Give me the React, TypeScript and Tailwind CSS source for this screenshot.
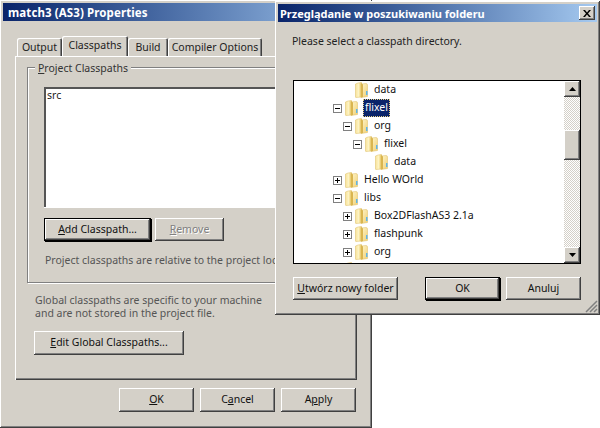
import React from "react";

const raised = "shadow-[inset_-1px_-1px_0_#404040,inset_1px_1px_0_#ffffff,inset_-2px_-2px_0_#808080]";
const etched = "border border-[#808080] shadow-[1px_1px_0_#ffffff,inset_1px_1px_0_#ffffff]";

function Btn({ className = "", isDefault = false, disabled = false, children }: { className?: string; isDefault?: boolean; disabled?: boolean; children: React.ReactNode }) {
  const outer = isDefault ? "border border-black shadow-[inset_-1px_-1px_0_#404040,inset_1px_1px_0_#ffffff,inset_-2px_-2px_0_#808080,1px_1px_0_#000000]" : raised;
  const text = disabled ? "text-[#808080] [text-shadow:1px_1px_0_#ffffff]" : "text-[#111111]";
  return <div className={`flex items-center justify-center whitespace-nowrap bg-[#d4d0c8] pb-[1px] ${outer} ${text} ${className}`}>{children}</div>;
}

function Tab({ className, label, active = false }: { className: string; label: string; active?: boolean }) {
  return (
    <div className={`flex items-center justify-center whitespace-nowrap rounded-t-[2px] bg-[#d4d0c8] text-[#222222] shadow-[inset_1px_1px_0_#ffffff,inset_-1px_0_0_#404040,inset_-2px_0_0_#808080] ${active ? "relative z-10 h-[20px] pb-[2px]" : "h-[18px]"} ${className}`}>
      {label}
    </div>
  );
}

function Folder() {
  return (
    <svg width="13" height="16" viewBox="0 0 13 16" className="shrink-0">
      <defs>
        <linearGradient id="fa" x1="0" y1="0" x2="1" y2="0">
          <stop offset="0" stopColor="#f8e39a" />
          <stop offset="0.5" stopColor="#fdf3c4" />
          <stop offset="1" stopColor="#e9c862" />
        </linearGradient>
        <linearGradient id="fb" x1="0" y1="0" x2="1" y2="1">
          <stop offset="0" stopColor="#fff7cf" />
          <stop offset="1" stopColor="#f0cf72" />
        </linearGradient>
      </defs>
      <path d="M0.5 2 L3 1 L6.5 0.5 L6.5 15 L1 15.5 Q0.5 15.5 0.5 15 Z" fill="url(#fa)" stroke="#dcbc62" strokeWidth="0.5" />
      <path d="M6 2 L11 1.5 Q12.5 1.5 12.5 3 L12.5 14.5 L6 15.5 Z" fill="url(#fb)" stroke="#dcbc62" strokeWidth="0.5" />
      <path d="M6 1 L8 2.5 L8 15 L6 15.5 Z" fill="#d9b550" />
      <rect x="11" y="9" width="1.5" height="4" fill="#5fb4e8" />
    </svg>
  );
}

function Expander({ open }: { open: boolean }) {
  return (
    <svg width="9" height="9" viewBox="0 0 9 9" className="shrink-0">
      <rect x="0.5" y="0.5" width="8" height="8" fill="#ffffff" stroke="#808080" />
      <rect x="2" y="4" width="5" height="1" fill="#000000" />
      {!open && <rect x="4" y="2" width="1" height="5" fill="#000000" />}
    </svg>
  );
}

const rows: { level: number; label: string; exp?: "open" | "closed"; selected?: boolean }[] = [
  { level: 1, label: "data" },
  { level: 0, label: "flixel", exp: "open", selected: true },
  { level: 1, label: "org", exp: "open" },
  { level: 2, label: "flixel", exp: "open" },
  { level: 3, label: "data" },
  { level: 0, label: "Hello WOrld", exp: "closed" },
  { level: 0, label: "libs", exp: "open" },
  { level: 1, label: "Box2DFlashAS3 2.1a", exp: "closed" },
  { level: 1, label: "flashpunk", exp: "closed" },
  { level: 1, label: "org", exp: "closed" },
  { level: 0, label: "", exp: undefined },
];

function ScrollButton({ up }: { up: boolean }) {
  return (
    <div className={`flex h-[16px] items-center justify-center bg-[#d4d0c8] ${raised}`}>
      <svg width="7" height="4" viewBox="0 0 7 4">
        <path d={up ? "M3.5 0 L7 4 L0 4 Z" : "M0 0 L7 0 L3.5 4 Z"} fill="#000000" />
      </svg>
    </div>
  );
}

export default function App() {
  return (
    <div className="relative h-[428px] w-[600px] overflow-hidden bg-white font-['Noto_Sans',sans-serif] text-[10.5px] leading-[13px]">
      {/* Properties window */}
      <div className={`absolute left-0 top-0 flex h-[428px] w-[372px] flex-col bg-[#d4d0c8] pl-[3px] pr-[3px] pt-[3px] ${raised}`}>
        <div className="flex h-[18px] shrink-0 items-center bg-gradient-to-r from-[#0a246a] to-[#a6caf0] pl-[5px] text-[11.5px] font-bold tracking-[0.1px] text-white">
          match3 (AS3) Properties
        </div>
        <div className="flex flex-col pl-[12px] pr-[12px] pt-[15px]">
          <div className="flex items-end pl-[2px]">
            <Tab className="w-[45px]" label="Output" />
            <Tab className="w-[66px]" label="Classpaths" active />
            <Tab className="w-[40px]" label="Build" />
            <Tab className="w-[94px]" label="Compiler Options" />
          </div>
          <div className="flex h-[324px] flex-col bg-[#d4d0c8] pl-[12px] pt-[11px] shadow-[inset_1px_1px_0_#ffffff,inset_-1px_-1px_0_#404040,inset_-2px_-2px_0_#808080]">
            <div className={`relative flex h-[216px] w-[400px] flex-col pl-[16px] pt-[19px] ${etched}`}>
              <div className="absolute left-[7px] top-[-6px] bg-[#d4d0c8] px-[3px] text-[#333333]">
                <u>P</u>roject Classpaths
              </div>
              <div className="h-[120px] w-[300px] border-l-2 border-t-2 border-l-[#555555] border-t-[#555555] bg-white pl-[1px] text-[#222222] shadow-[0_1px_0_#ffffff]">
                src
              </div>
              <div className="mt-[11px] flex gap-[4px]">
                <Btn className="h-[23px] w-[107px]" isDefault>
                  <span><u>A</u>dd Classpath...</span>
                </Btn>
                <Btn className="h-[23px] w-[69px]" disabled>
                  <span><u>R</u>emove</span>
                </Btn>
              </div>
              <div className="mt-[13px] whitespace-nowrap pl-[1px] text-[#555555]">
                Project classpaths are relative to the project location
              </div>
            </div>
            <div className="mt-[11px] pl-[8px] text-[#555555]">
              Global classpaths are specific to your machine
              <br />
              and are not stored in the project file.
            </div>
            <Btn className="ml-[7px] mt-[11px] h-[24px] w-[150px]">
              <span><u>E</u>dit Global Classpaths...</span>
            </Btn>
          </div>
          <div className="mt-[8px] flex justify-end gap-[6px] pr-[1px]">
            <Btn className="h-[24px] w-[75px]"><span><u>O</u>K</span></Btn>
            <Btn className="h-[24px] w-[75px]"><span>C<u>a</u>ncel</span></Btn>
            <Btn className="h-[24px] w-[75px]"><span>A<u>p</u>ply</span></Btn>
          </div>
        </div>
      </div>

      {/* Browse-for-folder window */}
      <div className={`absolute left-[275px] top-[1px] flex h-[314px] w-[325px] flex-col bg-[#d4d0c8] pl-[3px] pr-[3px] pt-[3px] ${raised}`}>
        <div className="flex h-[18px] shrink-0 items-center justify-between bg-gradient-to-r from-[#0a246a] to-[#a6caf0] pl-[2px] pr-[2px] text-[11px] font-bold text-white">
          <span>Przeglądanie w poszukiwaniu folderu</span>
          <div className={`flex h-[14px] w-[16px] items-center justify-center bg-[#d4d0c8] ${raised}`}>
            <svg width="8" height="7" viewBox="0 0 8 7">
              <path d="M0 0 L2 0 L4 2.5 L6 0 L8 0 L5 3.5 L8 7 L6 7 L4 4.5 L2 7 L0 7 L3 3.5 Z" fill="#000000" />
            </svg>
          </div>
        </div>
        <div className="pl-[14px] pt-[13px] text-[#222222]">Please select a classpath directory.</div>
        <div className="ml-[15px] mt-[32px] flex h-[184px] w-[288px] border border-black bg-white">
          <div className="h-full flex-1 overflow-hidden text-[#111111]">
            {rows.map((r, i) => (
              <div key={i} className="flex h-[18px] items-center" style={{ paddingLeft: 39 + r.level * 10 }}>
                <div className="mr-[3px] flex w-[9px] shrink-0 items-center">
                  {r.exp && <Expander open={r.exp === "open"} />}
                </div>
                <Folder />
                {r.selected ? (
                  <span className="ml-[5px] flex h-[18px] items-center border border-dotted border-[#e8d080] bg-[#0a246a] px-[1px] pb-[1px] text-white">{r.label}</span>
                ) : (
                  <span className="ml-[6px] whitespace-nowrap pb-[1px]">{r.label}</span>
                )}
              </div>
            ))}
          </div>
          <div className="flex h-full w-[16px] shrink-0 flex-col bg-[repeating-conic-gradient(#d4d0c8_0_25%,#ffffff_0_50%)] bg-size-[2px_2px]">
            <ScrollButton up />
            <div className={`mt-[33px] h-[30px] bg-[#d4d0c8] ${raised}`} />
            <div className="flex-1" />
            <ScrollButton up={false} />
          </div>
        </div>
        <div className="ml-[15px] mt-[13px] flex w-[288px] text-[#111111]">
          <Btn className="h-[23px] w-[105px]"><span><u>U</u>twórz nowy folder</span></Btn>
          <Btn className="ml-[27px] h-[23px] w-[75px]" isDefault><span>OK</span></Btn>
          <Btn className="ml-[6px] h-[23px] w-[75px]"><span>Anuluj</span></Btn>
        </div>
        <svg width="13" height="13" viewBox="0 0 13 13" className="absolute bottom-[2px] right-[2px]">
          <path d="M12 1 L1 12 M12 5 L5 12 M12 9 L9 12" stroke="#808080" strokeWidth="1.5" />
        </svg>
      </div>
    </div>
  );
}
